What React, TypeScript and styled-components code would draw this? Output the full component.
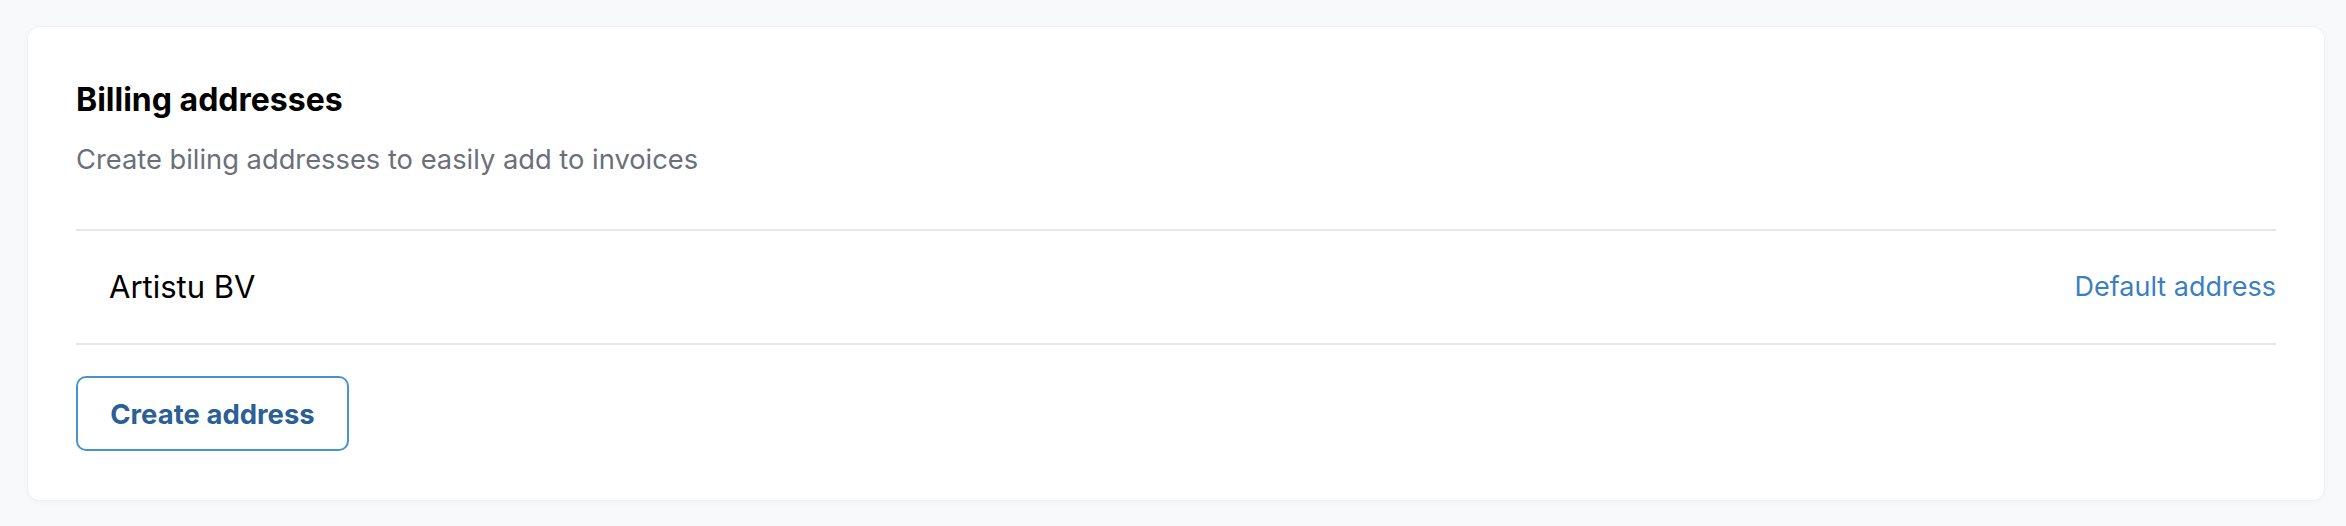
import React from 'react';
import styled, { createGlobalStyle } from 'styled-components';

const GlobalStyle = createGlobalStyle`
  html, body {
    margin: 0;
    background: #f8f9fb;
    font-family: Inter, "Noto Sans", sans-serif;
  }
`;

const Page = styled.div`
  padding: 27px 22px 26px 28px;
`;

const Card = styled.section`
  background: #fff;
  border-radius: 12px;
  box-shadow: 0 0 0 1px #f0f1f4, 0 2px 6px rgba(20, 30, 50, 0.04);
  padding: 54px 48px 49px;
`;

const Title = styled.h2`
  margin: 0;
  font-size: 32px;
  line-height: 38px;
  font-weight: 700;
  color: #000;
`;

const Subtitle = styled.p`
  margin: 24px 0 52px;
  font-size: 27.3px;
  line-height: 34px;
  color: #6b6f7a;
`;

const AddressList = styled.ul`
  list-style: none;
  margin: 0;
  padding: 0;
  border-top: 2px solid #e6e6e8;
`;

const AddressRow = styled.li`
  display: flex;
  align-items: center;
  justify-content: space-between;
  height: 112px;
  padding-left: 33px;
  border-bottom: 2px solid #e6e6e8;
`;

const AddressName = styled.span`
  font-size: 31px;
  line-height: 36px;
  color: #000;
`;

const DefaultLink = styled.a`
  font-size: 27px;
  line-height: 34px;
  color: #3b7fc0;
  text-decoration: none;
`;

const OutlineButton = styled.button`
  margin-top: 31px;
  height: 75px;
  width: 273px;
  border: 2px solid #4a94cc;
  border-radius: 10px;
  background: #fff;
  color: #2b5f95;
  font-family: inherit;
  font-size: 27.5px;
  font-weight: 700;
  cursor: pointer;
`;

type Address = { name: string; isDefault?: boolean };

const addresses: Address[] = [{ name: 'Artistu BV', isDefault: true }];

export default function App() {
  return (
    <Page>
      <GlobalStyle />
      <Card>
        <Title>Billing addresses</Title>
        <Subtitle>Create biling addresses to easily add to invoices</Subtitle>
        <AddressList>
          {addresses.map((address) => (
            <AddressRow key={address.name}>
              <AddressName>{address.name}</AddressName>
              {address.isDefault && <DefaultLink href='#'>Default address</DefaultLink>}
            </AddressRow>
          ))}
        </AddressList>
        <OutlineButton>Create address</OutlineButton>
      </Card>
    </Page>
  );
}
